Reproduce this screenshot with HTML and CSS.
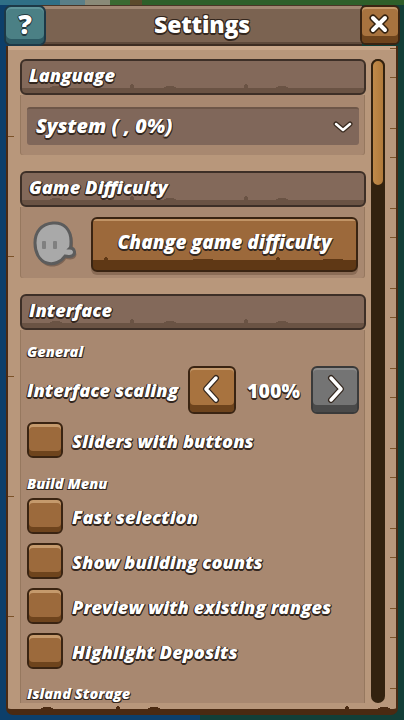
FILE: index.html
```html
<!DOCTYPE html>
<html lang="en">
<head>
<meta charset="utf-8">
<title>Settings</title>
<link rel="stylesheet" href="styles.css">
</head>
<body>
<div class="screen">
  <header class="header">
    <button class="btn-help">?</button>
    <h1 class="title">Settings</h1>
    <button class="btn-close">
      <svg width="20" height="20" viewBox="0 0 20 20"><path class="x-under" d="M4 4L16 16M16 4L4 16"/><path class="x-over" d="M4 4L16 16M16 4L4 16"/></svg>
    </button>
  </header>
  <main class="panel">
    <div class="scroll">
      <section class="section">
        <h2 class="bar">Language</h2>
        <div class="body body-lang">
          <div class="select">
            <span class="select-text">System ( , 0%)</span>
            <svg class="chev" width="20" height="14" viewBox="0 0 20 14"><path class="chev-under" d="M3 4L10 10L17 4"/><path class="chev-over" d="M3 4L10 10L17 4"/></svg>
          </div>
        </div>
      </section>
      <section class="section">
        <h2 class="bar">Game Difficulty</h2>
        <div class="body body-diff">
          <svg class="ghost" width="46" height="48" viewBox="0 0 46 48">
            <path class="ghost-shade" d="M21 3C33 2 40 10 40 22C40 26 40 28 40 29C44 30 45 36 40 38C37 39 35 38 33 38C29 44 22 47 15 45C6 42 3 33 3 24C3 12 9 4 21 3Z"/>
            <path class="ghost-body" d="M20 2C31 1 38 9 38 20C38 24 38 26 37 27C42 27 43 33 39 35C36 36 34 35 32 35C28 41 21 44 14 42C6 40 2 31 2 22C2 11 8 3 20 2Z"/>
            <rect class="ghost-eye" x="9" y="20" width="4" height="8" rx="1"/>
            <rect class="ghost-eye" x="20" y="20" width="4" height="8" rx="1"/>
          </svg>
          <button class="btn-wood">Change game difficulty</button>
        </div>
      </section>
      <section class="section">
        <h2 class="bar">Interface</h2>
        <div class="body body-iface">
          <h3 class="sub sub-first">General</h3>
          <div class="scale-row">
            <span class="label scale-label">Interface scaling</span>
            <button class="btn-square btn-orange">
              <svg width="26" height="34" viewBox="0 0 26 34"><path class="arr-under" d="M17 6L7 17L17 28"/><path class="arr-over" d="M17 6L7 17L17 28"/></svg>
            </button>
            <span class="percent">100%</span>
            <button class="btn-square btn-grey">
              <svg width="26" height="34" viewBox="0 0 26 34"><path class="arr-under" d="M9 6L19 17L9 28"/><path class="arr-over" d="M9 6L19 17L9 28"/></svg>
            </button>
          </div>
          <div class="check-row"><span class="check"></span><span class="label">Sliders with buttons</span></div>
          <h3 class="sub sub-build">Build Menu</h3>
          <div class="check-list">
            <div class="check-row"><span class="check"></span><span class="label">Fast selection</span></div>
            <div class="check-row"><span class="check"></span><span class="label">Show building counts</span></div>
            <div class="check-row"><span class="check"></span><span class="label">Preview with existing ranges</span></div>
            <div class="check-row"><span class="check"></span><span class="label">Highlight Deposits</span></div>
          </div>
          <h3 class="sub sub-island">Island Storage</h3>
        </div>
      </section>
    </div>
    <div class="track"><div class="thumb"></div></div>
  </main>
</div>
</body>
</html>
```
FILE: styles.css
```css
* { box-sizing: border-box; }
html, body { margin: 0; padding: 0; }
body {
  width: 404px;
  height: 720px;
  overflow: hidden;
  font-family: "Open Sans", "Lato", sans-serif;
  color: #fff;
}
button { font-family: inherit; padding: 0; cursor: pointer; }
h1, h2, h3 { margin: 0; }

.screen {
  width: 404px;
  height: 720px;
  padding: 5px 4px 5px;
  overflow: hidden;
  display: flex;
  flex-direction: column;
  background:
    linear-gradient(90deg, #2f6f86 0 60px, #5a7f88 60px 85px, #8a8a78 85px 110px, #3a6a32 110px 130px, #5b4a2c 130px 142px, #2e5f2a 142px 404px) top left / 404px 5px no-repeat,
    linear-gradient(90deg, #0d3f6a 0 200px, #123f38 200px 404px);
}

/* header */
.header {
  height: 41px;
  flex: none;
  display: flex;
  align-items: stretch;
  position: relative;
  background:
    linear-gradient(#4a3526 0 1px, #a08672 1px 4px, #7b6351 4px 37px, #5f4a3b 37px 39px, #3e2d22 39px 41px) 6px 0 / 352px 41px no-repeat;
}
.btn-help {
  width: 42px;
  height: 41px;
  flex: none;
  border: 2px solid #1d3947;
  border-radius: 7px;
  background: #4b8085;
  box-shadow: inset 0 -5px 0 #2d5a64, inset 0 2px 0 #5f959a;
  color: #fff;
  font-size: 27px;
  font-weight: 800;
  line-height: 34px;
  padding-bottom: 4px;
  text-shadow: 0 2px 0 #243a40, 1px 0 0 #243a40, -1px 0 0 #243a40, 0 -1px 0 #243a40;
}
.title {
  flex: 1;
  text-align: center;
  font-size: 23px;
  font-weight: 800;
  letter-spacing: -0.2px;
  line-height: 39px;
  padding-right: 2px;
  text-shadow: 0 2px 0 #33261d, 1px 1px 0 #33261d, -1px 1px 0 #33261d, 1px -1px 0 #33261d, -1px -1px 0 #33261d;
}
.btn-close {
  width: 40px;
  height: 40px;
  flex: none;
  border: 2px solid #3a2412;
  border-radius: 6px;
  background: #a8733f;
  box-shadow: inset 0 -7px 0 #6e441d, inset 0 2px 0 #c59a6c;
  display: flex;
  align-items: flex-start;
  justify-content: center;
  padding: 7px 2px 0 0;
}
.x-under { fill: none; stroke: #33210f; stroke-width: 7; stroke-linecap: round; }
.x-over { fill: none; stroke: #fff; stroke-width: 4; stroke-linecap: round; }

/* panel */
.panel {
  flex: 1;
  margin: 0 2px 0 2px;
  min-height: 0;
  display: flex;
  gap: 5px;
  padding: 13px 13px 6px 12px;
  border-radius: 0 0 7px 7px;
  border: solid #4a2a12;
  border-width: 0 2px 6px 2px;
  background:
    radial-gradient(ellipse 6px 2px at 39px 100%, #4a2a12 98%, transparent),
    radial-gradient(ellipse 2px 3px at 110px 100%, #4a2a12 98%, transparent),
    radial-gradient(ellipse 6px 2px at 146px 100%, #4a2a12 98%, transparent),
    radial-gradient(ellipse 2px 3px at 339px 100%, #4a2a12 98%, transparent),
    radial-gradient(ellipse 6px 2px at 376px 100%, #4a2a12 98%, transparent),
    linear-gradient(transparent 0 90px, #7c5228 90px 91px, transparent 91px 132px, #7c5228 132px 133px, transparent 133px 170px, #c29762 170px 171px, transparent 171px 212px, #7c5228 212px 213px, transparent 213px) 0 0 / 6px 120px repeat-y,
    linear-gradient(transparent 0 2px, #7c5228 2px 3px, transparent 3px 31px, #7c5228 31px 32px, transparent 32px 82px, #7c5228 82px 83px, transparent 83px 111px, #7c5228 111px 112px, transparent 112px) right 0 top 0 / 6px 160px repeat-y,
    linear-gradient(#c9a78a 0 4px, #b8977b 4px);
  position: relative;
}
.scroll {
  width: 346px;
  flex: none;
  height: 100%;
  overflow: hidden;
  display: flex;
  flex-direction: column;
  gap: 16px;
}
.track {
  width: 14px;
  flex: none;
  height: 100%;
  border-radius: 7px;
  background: #33220f;
}
.thumb {
  height: 128px;
  border: 2px solid #33220f;
  border-radius: 7px;
  background: linear-gradient(90deg, #c08a4a, #b17a3a);
}

/* section */
.bar {
  height: 36px;
  border: 2px solid #3d2f27;
  border-radius: 6px;
  padding-left: 7px;
  font-size: 18.3px;
  font-weight: 800;
  font-style: italic;
  line-height: 27px;
  background:
    radial-gradient(ellipse 6px 2px at 34px 100%, #6a5344 98%, transparent) 0 0 / 100% 27px no-repeat,
    radial-gradient(ellipse 2px 4px at 110px 100%, #6a5344 98%, transparent) 0 0 / 100% 27px no-repeat,
    radial-gradient(ellipse 6px 2px at 148px 100%, #6a5344 98%, transparent) 0 0 / 100% 27px no-repeat,
    radial-gradient(ellipse 2px 4px at 224px 100%, #6a5344 98%, transparent) 0 0 / 100% 27px no-repeat,
    radial-gradient(ellipse 6px 2px at 260px 100%, #6a5344 98%, transparent) 0 0 / 100% 27px no-repeat,
    linear-gradient(#83695a 0 27px, #6a5344 27px);
  text-shadow: 0 2px 0 #33261d, 1px 1px 0 #33261d, -1px 1px 0 #33261d, 1px 0 0 #33261d, -1px 0 0 #33261d;
}
.body {
  width: 345px;
  background: #a88870;
  border-radius: 0 0 3px 3px;
  box-shadow: inset 1px 0 0 #96785f, inset -1px 0 0 #96785f;
}
.body-lang { height: 60px; padding: 12px 6px 0 7px; }
.select {
  height: 38px;
  background: #80675a;
  border-top: 2px solid #6d5648;
  border-radius: 3px;
  display: flex;
  align-items: center;
  justify-content: space-between;
  padding: 0 6px 0 9px;
}
.select-text {
  font-size: 19.8px;
  font-weight: 800;
  font-style: italic;
  padding-bottom: 3px;
  text-shadow: 0 2px 0 #33261d, 1px 1px 0 #33261d, -1px 1px 0 #33261d;
}
.chev-under { fill: none; stroke: #3a2b20; stroke-width: 5; stroke-linecap: round; stroke-linejoin: round; }
.chev-over { fill: none; stroke: #fff; stroke-width: 2.5; stroke-linecap: round; stroke-linejoin: round; }

.body-diff {
  height: 71px;
  display: flex;
  align-items: flex-start;
  padding: 10px 7px 0 13px;
  gap: 12px;
}
.ghost { margin-top: 4px; flex: none; }
.ghost-shade { fill: #7d6454; }
.ghost-body { fill: #a9a9a9; stroke: #5c5c5c; stroke-width: 3; }
.ghost-eye { fill: #808080; }
.btn-wood {
  flex: 1;
  height: 55px;
  border: 2px solid #3a2412;
  border-radius: 6px;
  background:
    radial-gradient(ellipse 2px 3px at 13px 41px, #5f3815 98%, transparent),
    radial-gradient(ellipse 12px 1px at 110px 41px, #5f3815 98%, transparent),
    radial-gradient(ellipse 2px 3px at 185px 41px, #5f3815 98%, transparent),
    radial-gradient(ellipse 12px 1px at 240px 41px, #5f3815 98%, transparent),
    linear-gradient(#c19466 0 2px, #9c693b 2px 41px, #5f3815 41px);
  box-shadow: 0 3px 0 #8a6c56;
  color: #fff;
  font-size: 19px;
  font-weight: 800;
  font-style: italic;
  line-height: 40px;
  padding-bottom: 5px;
  text-shadow: 0 2px 0 #33261d, 1px 1px 0 #33261d, -1px 1px 0 #33261d;
}

.body-iface {
  padding: 0 6px 0 7px;
  height: 400px;
}
.sub {
  font-size: 14.6px;
  font-weight: 800;
  font-style: italic;
  line-height: 18px;
  text-shadow: 0 1px 0 #33261d, 1px 1px 0 #33261d, -1px 1px 0 #33261d;
}
.sub-first { padding-top: 12px; height: 36px; }
.sub-build { margin-top: 16px; margin-bottom: 6px; }
.sub-island { margin-top: 15px; }
.label {
  font-size: 18.3px;
  font-weight: 800;
  font-style: italic;
  white-space: nowrap;
  text-shadow: 0 2px 0 #33261d, 1px 1px 0 #33261d, -1px 1px 0 #33261d, 1px 0 0 #33261d, -1px 0 0 #33261d;
}
.scale-row {
  height: 48px;
  display: flex;
  align-items: center;
}
.scale-label { width: 161px; flex: none; padding-bottom: 2px; }
.percent {
  width: 75px;
  text-align: center;
  font-size: 19.5px;
  font-weight: 800;
  text-shadow: 0 2px 0 #33261d, 1px 1px 0 #33261d, -1px 1px 0 #33261d;
}
.btn-square {
  width: 48px;
  height: 48px;
  flex: none;
  border-radius: 6px;
  display: flex;
  align-items: flex-start;
  justify-content: center;
  padding-top: 4px;
}
.btn-orange {
  border: 2px solid #3a2412;
  background: #a8733f;
  box-shadow: inset 0 -7px 0 #6e441d, inset 0 2px 0 #c59a6c;
}
.btn-grey {
  border: 2px solid #3a3a3a;
  background: #747474;
  box-shadow: inset 0 -7px 0 #4a4a4a, inset 0 2px 0 #8c8c8c;
}
.arr-under { fill: none; stroke: #33261d; stroke-width: 6; stroke-linecap: round; stroke-linejoin: round; }
.arr-over { fill: none; stroke: #fff; stroke-width: 3.5; stroke-linecap: round; stroke-linejoin: round; }
.check-row {
  height: 36px;
  display: flex;
  align-items: center;
  gap: 9px;
}
.scale-row + .check-row { margin-top: 8px; }
.check-list { display: flex; flex-direction: column; gap: 9px; }
.check {
  width: 36px;
  height: 36px;
  flex: none;
  border: 2px solid #3a2412;
  border-radius: 6px;
  background: #9c6a3c;
  box-shadow: inset 0 -5px 0 #6e441d, inset 0 3px 0 #c59a6c;
}
```
